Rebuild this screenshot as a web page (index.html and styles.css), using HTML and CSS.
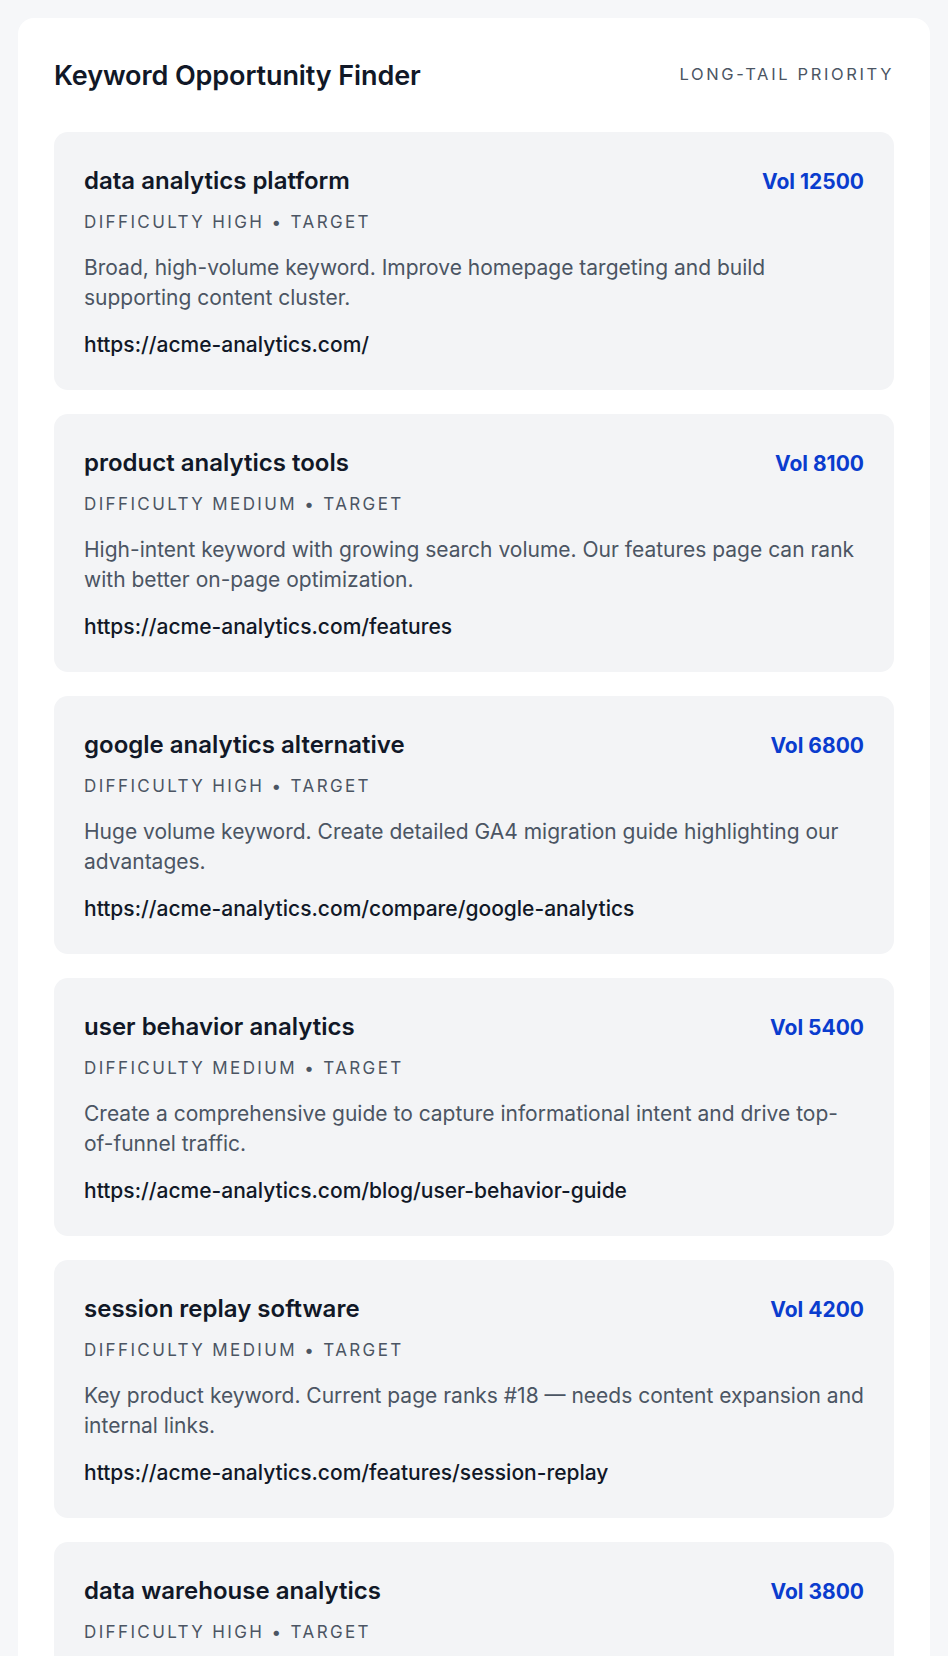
FILE: index.html
```html
<!DOCTYPE html>
<html lang="en">
<head>
<meta charset="utf-8">
<title>Keyword Opportunity Finder</title>
<link rel="stylesheet" href="styles.css">
</head>
<body>
<main class="panel">
  <header class="panel-head">
    <h1 class="panel-title">Keyword Opportunity Finder</h1>
    <span class="panel-tag">Long-tail priority</span>
  </header>
  <section class="list">
    <article class="kw">
      <div class="kw-top"><h2 class="kw-name">data analytics platform</h2><span class="kw-vol">Vol 12500</span></div>
      <div class="kw-meta">Difficulty high • target</div>
      <p class="kw-desc">Broad, high-volume keyword. Improve homepage targeting and build supporting content cluster.</p>
      <div class="kw-url">https://acme-analytics.com/</div>
    </article>
    <article class="kw">
      <div class="kw-top"><h2 class="kw-name">product analytics tools</h2><span class="kw-vol">Vol 8100</span></div>
      <div class="kw-meta">Difficulty medium • target</div>
      <p class="kw-desc">High-intent keyword with growing search volume. Our features page can rank with better on-page optimization.</p>
      <div class="kw-url">https://acme-analytics.com/features</div>
    </article>
    <article class="kw">
      <div class="kw-top"><h2 class="kw-name">google analytics alternative</h2><span class="kw-vol">Vol 6800</span></div>
      <div class="kw-meta">Difficulty high • target</div>
      <p class="kw-desc">Huge volume keyword. Create detailed GA4 migration guide highlighting our advantages.</p>
      <div class="kw-url">https://acme-analytics.com/compare/google-analytics</div>
    </article>
    <article class="kw">
      <div class="kw-top"><h2 class="kw-name">user behavior analytics</h2><span class="kw-vol">Vol 5400</span></div>
      <div class="kw-meta">Difficulty medium • target</div>
      <p class="kw-desc">Create a comprehensive guide to capture informational intent and drive top-of-funnel traffic.</p>
      <div class="kw-url">https://acme-analytics.com/blog/user-behavior-guide</div>
    </article>
    <article class="kw">
      <div class="kw-top"><h2 class="kw-name">session replay software</h2><span class="kw-vol">Vol 4200</span></div>
      <div class="kw-meta">Difficulty medium • target</div>
      <p class="kw-desc">Key product keyword. Current page ranks #18 — needs content expansion and internal links.</p>
      <div class="kw-url">https://acme-analytics.com/features/session-replay</div>
    </article>
    <article class="kw">
      <div class="kw-top"><h2 class="kw-name">data warehouse analytics</h2><span class="kw-vol">Vol 3800</span></div>
      <div class="kw-meta">Difficulty high • target</div>
      <p class="kw-desc">Technical audience keyword. Publish integration docs and warehouse connector guides.</p>
      <div class="kw-url">https://acme-analytics.com/integrations/warehouse</div>
    </article>
  </section>
</main>
</body>
</html>
```
FILE: styles.css
```css
* { box-sizing: border-box; }
html, body { margin: 0; padding: 0; }
body {
  background: #f6f7f9;
  font-family: Inter, "Liberation Sans", sans-serif;
  color: #111827;
  padding: 18px;
}
.panel {
  background: #ffffff;
  border-radius: 16px;
  padding: 40px 36px 36px;
}
.panel-head {
  display: flex;
  justify-content: space-between;
  align-items: center;
  margin-bottom: 38px;
}
.panel-title {
  margin: 0;
  font-size: 27px;
  line-height: 36px;
  font-weight: 600;
  letter-spacing: -0.1px;
  color: #111827;
}
.panel-tag {
  font-size: 16.5px;
  letter-spacing: 0.16em;
  text-transform: uppercase;
  color: #4b5563;
  margin-top: -4px;
}
.list {
  display: flex;
  flex-direction: column;
  gap: 24px;
}
.kw {
  background: #f3f4f6;
  border-radius: 14px;
  padding: 33px 30px 31px;
}
.kw-top {
  display: flex;
  justify-content: space-between;
  align-items: center;
}
.kw-name {
  margin: 0;
  font-size: 24px;
  line-height: 32px;
  font-weight: 600;
  color: #111827;
}
.kw-vol {
  font-size: 21px;
  font-weight: 700;
  color: #0a3cce;
}
.kw-meta {
  margin-top: 13px;
  font-size: 17px;
  line-height: 24px;
  letter-spacing: 0.14em;
  text-transform: uppercase;
  color: #4b5563;
}
.kw-desc {
  margin: 19px 0 0;
  font-size: 21px;
  line-height: 30px;
  color: #4b5563;
}
.kw-url {
  margin-top: 18px;
  font-size: 21px;
  line-height: 28px;
  font-weight: 500;
  color: #111827;
}
```
